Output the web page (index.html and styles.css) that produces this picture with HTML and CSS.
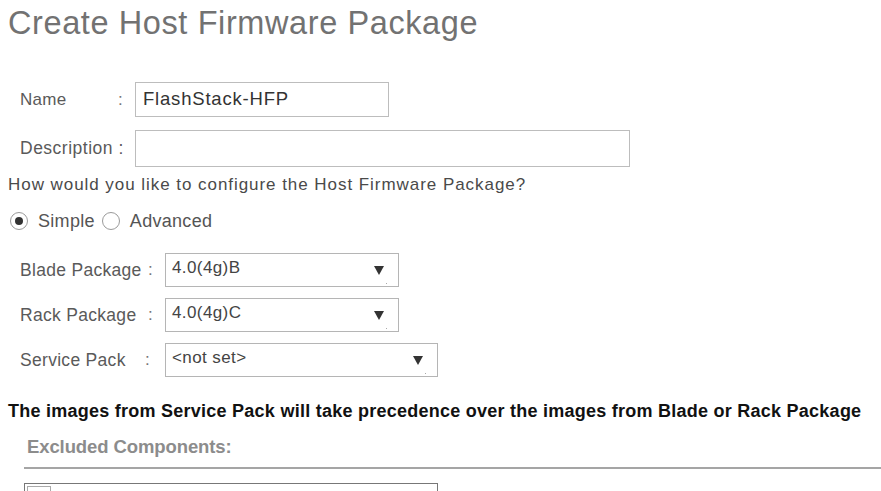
FILE: index.html
```html
<!DOCTYPE html>
<html>
<head>
<meta charset="utf-8">
<link rel="stylesheet" href="styles.css">
</head>
<body>
<div class="page">
  <h1 class="title">Create Host Firmware Package</h1>

  <div class="row row-name">
    <span class="label lbl-name">Name</span><span class="colon c-name">:</span>
    <div class="input in-name">FlashStack-HFP</div>
  </div>
  <div class="row row-desc">
    <span class="label lbl-desc">Description :</span>
    <div class="input in-desc"></div>
  </div>

  <p class="question">How would you like to configure the Host Firmware Package?</p>

  <div class="radios">
    <span class="radio checked"></span><span class="rlabel">Simple</span>
    <span class="radio"></span><span class="rlabel">Advanced</span>
  </div>

  <div class="row row-sel first">
    <span class="label lbl-sel w-blade">Blade Package</span><span class="colon c-sel">:</span>
    <div class="select">4.0(4g)B<span class="arrow"></span><span class="dot"></span></div>
  </div>
  <div class="row row-sel">
    <span class="label lbl-sel w-rack">Rack Package</span><span class="colon c-sel">:</span>
    <div class="select">4.0(4g)C<span class="arrow"></span><span class="dot"></span></div>
  </div>
  <div class="row row-sel">
    <span class="label lbl-sel w-svc">Service Pack</span><span class="colon c-svc">:</span>
    <div class="select wide">&lt;not set&gt;<span class="arrow"></span><span class="dot"></span></div>
  </div>

  <p class="notice">The images from Service Pack will take precedence over the images from Blade or Rack Package</p>

  <div class="excluded">Excluded Components:</div>
  <div class="rule"></div>
  <div class="table"><span class="cb"></span></div>
</div>
</body>
</html>
```

FILE: styles.css
```css
html, body {
  margin: 0;
  padding: 0;
  background: #fff;
  overflow: hidden;
}
.page {
  width: 881px;
  height: 491px;
  font-family: "Liberation Sans", Arial, sans-serif;
  color: #555;
  overflow: hidden;
}
.title {
  margin: 0;
  padding: 4px 0 0 8px;
  font-size: 32.5px;
  font-weight: normal;
  color: #727272;
  line-height: 38px;
  letter-spacing: 0.6px;
}
.row {
  display: flex;
  align-items: center;
}
.row-name {
  margin-top: 40px;
  height: 35px;
}
.row-desc {
  margin-top: 13px;
  height: 37px;
}
.label {
  font-size: 17px;
  color: #5a5a5a;
  white-space: nowrap;
  flex: none;
  min-width: 0;
}
.colon {
  font-size: 17px;
  color: #777;
  flex: none;
}
.lbl-name {
  margin-left: 20px;
  width: 98px;
  letter-spacing: 0.3px;
}
.c-name {
  width: 17px;
}
.lbl-desc {
  margin-left: 20px;
  width: 115px;
  font-size: 17.5px;
  letter-spacing: 0.5px;
}
.input {
  box-sizing: border-box;
  border: 1px solid #bdbdbd;
  height: 100%;
  font-size: 18.5px;
  color: #333;
  padding: 5px 0 0 7px;
  letter-spacing: 0.8px;
  flex: none;
}
.in-name { width: 254px; }
.in-desc { width: 495px; }
.question {
  margin: 8px 0 0 8px;
  font-size: 17px;
  color: #4a4a4a;
  line-height: 20px;
  letter-spacing: 0.95px;
}
.radios {
  display: flex;
  align-items: center;
  margin: 16px 0 0 10px;
  height: 20px;
}
.radio {
  box-sizing: border-box;
  width: 18px;
  height: 18px;
  border: 1px solid #9a9a9a;
  border-radius: 50%;
  position: relative;
  margin-right: 10px;
}
.radio.checked::after {
  content: "";
  position: absolute;
  left: 4px;
  top: 4px;
  width: 8px;
  height: 8px;
  border-radius: 50%;
  background: #333;
}
.rlabel {
  font-size: 18px;
  color: #555;
  margin-right: 7px;
  letter-spacing: 0.3px;
}
.row-sel {
  height: 34px;
  margin-top: 11px;
}
.row-sel.first {
  margin-top: 22px;
}
.lbl-sel {
  margin-left: 20px;
  font-size: 17.5px;
  letter-spacing: 0.3px;
  overflow: visible;
}
.w-blade { width: 128px; }
.w-rack { width: 128px; }
.w-svc { width: 125px; }
.c-sel { width: 17px; }
.c-svc { width: 20px; }
.select {
  box-sizing: border-box;
  width: 234px;
  height: 100%;
  border: 1px solid #b5b5b5;
  position: relative;
  font-size: 17px;
  color: #444;
  padding: 4px 0 0 6px;
  letter-spacing: 0.4px;
  flex: none;
}
.select.wide { width: 273px; }
.arrow {
  position: absolute;
  right: 14px;
  top: 12px;
  width: 0;
  height: 0;
  border-left: 5px solid transparent;
  border-right: 5px solid transparent;
  border-top: 9px solid #333;
}
.dot {
  position: absolute;
  right: 11px;
  bottom: 2px;
  width: 1px;
  height: 1px;
  background: #aaa;
}
.notice {
  margin: 23px 0 0 8px;
  font-size: 18px;
  font-weight: bold;
  color: #111;
  letter-spacing: 0.25px;
  line-height: 22px;
}
.excluded {
  margin: 14px 0 0 27px;
  font-size: 18.5px;
  font-weight: bold;
  color: #8c8c8c;
  letter-spacing: -0.1px;
  line-height: 22px;
}
.rule {
  margin: 9px 0 0 24px;
  height: 0;
  border-top: 2px solid #a5a5a5;
}
.table {
  margin: 14px 0 0 24px;
  width: 414px;
  height: 20px;
  box-sizing: border-box;
  border: 1px solid #777;
  border-bottom: none;
  position: relative;
}
.cb {
  position: absolute;
  left: 2px;
  top: 2px;
  width: 24px;
  height: 18px;
  border: 1px solid #aaa;
  box-sizing: border-box;
}
```
